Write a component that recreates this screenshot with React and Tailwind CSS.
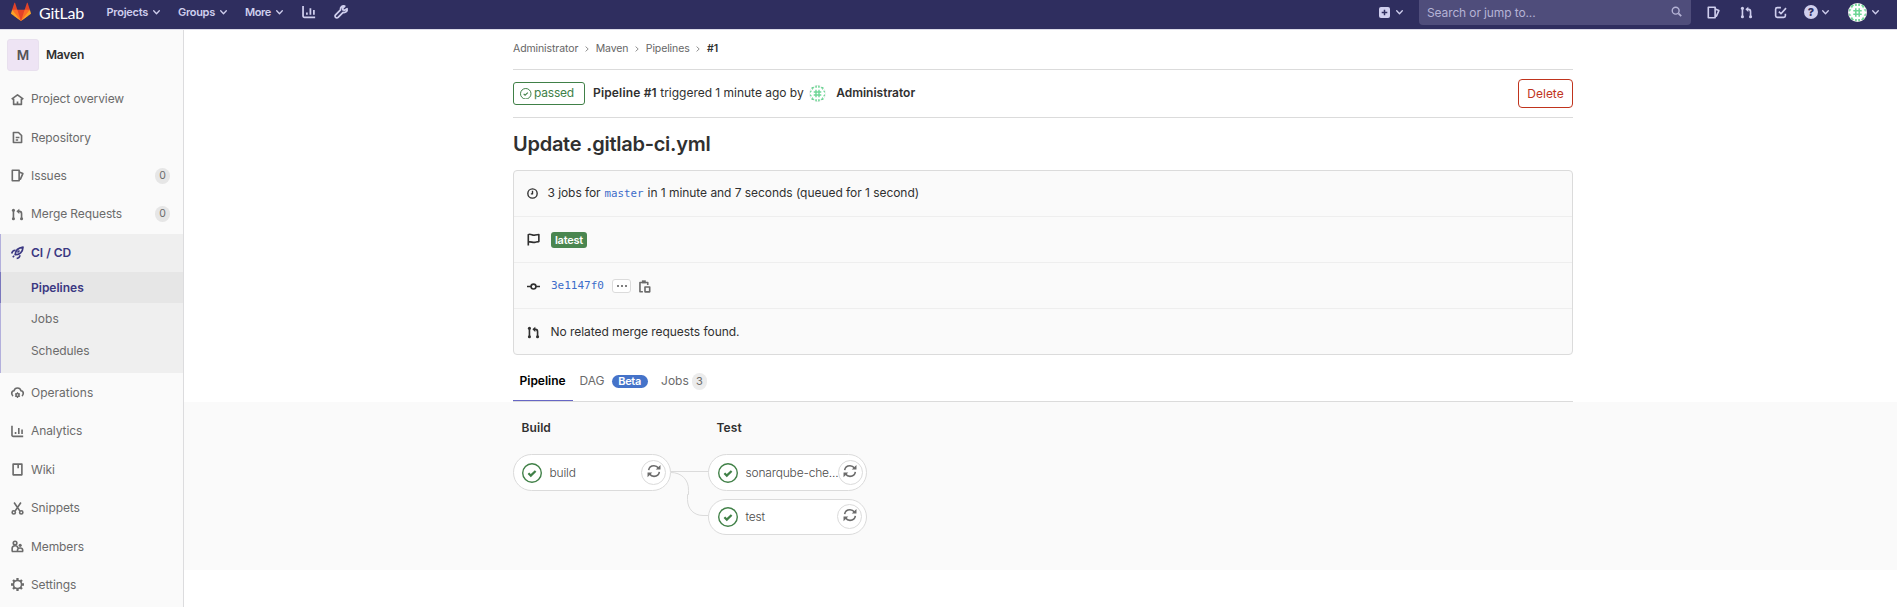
const ICONS = {
  home: <path d="M3.2 7v7h9.6V7M.8 7.6 8 2.4l7.2 5.2M8 14v-3.5" />,
  doc: <path d="M3 1.8h6.2L13 5.6v8.6H3zM5.8 8h4.6M5.8 11h3" />,
  issues: <path d="M1.6 1.6H10v12.8H1.6zM10 3.6l4.6 2-3 6.8H10" />,
  merge: (
    <>
      <path d="M3 3v10M13 13V7.2C13 5 12 4.2 10.6 4.2H9" />
      <path d="M10.2.8v6.6L6.6 4.1z" fill="currentColor" stroke="none" />
      <circle cx="3" cy="2.8" r="1.9" fill="currentColor" stroke="none" />
      <circle cx="3" cy="13.2" r="1.9" fill="currentColor" stroke="none" />
      <circle cx="13" cy="13.2" r="1.9" fill="currentColor" stroke="none" />
    </>
  ),
  rocket: (
    <>
      <path d="M5 10.8C5.4 6.4 8.6 2.2 14.8 1.4 14.6 7.2 10.4 11 5 10.8zM8 8l2.4-2.4" />
      <path d="M5.6 5.2C3 5 1.4 6.8.8 9.2M11 11.4c-.2 2.4-1.8 3.6-4 4M3.8 12.2l-1.6 1.6" />
    </>
  ),
  operations: (
    <>
      <path d="M2.6 12.2C1.4 11.6.9 10.4.9 9c0-1.7 1.2-3 2.8-3.1C4.3 3.6 6 2.4 8 2.4s3.7 1.2 4.3 3.5c1.6.1 2.8 1.4 2.8 3.1 0 1.4-.5 2.6-1.7 3.2" />
      <circle cx="8" cy="11.2" r="1.9" />
      <path d="M8 7.8v1M8 13.6v1.2M5 9.5l1 .5M10 12.4l1 .5M5 12.9l1-.5M10 10l1-.5" strokeWidth="1.5" />
    </>
  ),
  chart: <path d="M1.2 1v11.5A1.5 1.5 0 0 0 2.7 14H15M5.6 8.5V11M9.6 3.8V11M13.6 5.6V11" />,
  wiki: <path d="M2.6 1.4h10.8v13.2H2.6zM8.8 2v4.6" />,
  scissors: (
    <>
      <path d="M3.8.6 11 11.2M12.2.6 5 11.2" />
      <circle cx="3.4" cy="12.8" r="2" />
      <circle cx="12.6" cy="12.8" r="2" />
    </>
  ),
  members: (
    <>
      <circle cx="5" cy="3.8" r="2.2" />
      <path d="M1.4 14v-3.5C1.4 8 3 7 5 7s3.2.8 3.4 2.6M1 14.2h14M8 14v-1.5c0-1.9 1.4-2.7 3.2-2.7s3.2.8 3.2 2.7V14" />
      <circle cx="11.3" cy="6.6" r="1.9" fill="currentColor" stroke="none" />
    </>
  ),
  settings: (
    <>
      <circle cx="8" cy="8" r="5" />
      <path d="M8 0v3M8 13v3M0 8h3M13 8h3M2.5 2.5l2 2M11.5 11.5l2 2M2.5 13.5l2-2M11.5 4.5l2-2" strokeWidth="2.8" />
    </>
  ),
  wrench: (
    <path d="M14.9 4.3 12 6l-1.8-.4-.3-1.7 2.4-2.6C9.4.5 7 2.6 7.4 5.6l-5.6 5.6a2 2 0 0 0 2.9 2.9l5.7-5.6c3 .6 5.2-1.6 4.5-4.2z" />
  ),
  todo: <path d="M8.5 2H4a2 2 0 0 0-2 2v8a2 2 0 0 0 2 2h8a2 2 0 0 0 2-2V9.5M6 7l2.6 2.6 6.2-7" />,
  search: (
    <>
      <circle cx="6.8" cy="6.8" r="5" />
      <path d="m10.8 10.8 4 4" strokeWidth="2.6" />
    </>
  ),
  flag: <path d="M1.6 15.5V2c3-1.6 5 1.4 8 .6 1.600-.4 3-.8 5-.8v8.800c-2 0-3.200.6-5 .9-3 .5-5-1.500-8-.3" />,
  commit: (
    <>
      <circle cx="8" cy="8" r="3" />
      <path d="M0 8h5M11 8h5" />
    </>
  ),
  clock: (
    <>
      <circle cx="8" cy="8" r="6.8" />
      <path d="M8 4v4.6H5.6" />
    </>
  ),
  clipboard: (
    <>
      <path d="M6 14.4H2.4V3H12v3" />
      <path d="M4.8.4h4.8V4H4.8z" fill="currentColor" stroke="none" />
      <path d="M8.6 8.6h5.8v6H8.6z" />
    </>
  ),
  retry: (
    <>
      <path d="M1.9 7C2.3 4 4.8 1.9 8 1.9c2 0 3.9 1 5 2.6M14.1 9c-.4 3-2.9 5.1-6.1 5.1-2 0-3.9-1-5-2.6" />
      <path d="M15.4 1v5.400H10zM.6 15V9.600H6z" fill="currentColor" stroke="none" />
    </>
  ),
};

function Icon({ name, className = "size-[13px]", width = 2 }) {
  return (
    <svg viewBox="0 0 16 16" fill="none" stroke="currentColor" strokeWidth={width} strokeLinejoin="round" className={`shrink-0 overflow-visible ${className}`}>
      {ICONS[name]}
    </svg>
  );
}

function Chevron({ className = "" }) {
  return (
    <svg viewBox="0 0 7 5" fill="none" stroke="currentColor" strokeWidth="1.3" strokeLinecap="round" strokeLinejoin="round" className={`h-[5px] w-[7px] shrink-0 ${className}`}>
      <path d="M.7.8 3.5 3.7 6.3.8" />
    </svg>
  );
}

function Tanuki() {
  return (
    <svg viewBox="0 0 36 36" className="size-5 shrink-0">
      <path fill="#e24329" d="M2 14l9.38 9v-9l-4-12.28c-.205-.632-1.176-.632-1.38 0z" />
      <path fill="#e24329" d="M34 14l-9.38 9v-9l4-12.28c.205-.632 1.176-.632 1.38 0z" />
      <path fill="#e24329" d="M18 34.38 3 14h30z" />
      <path fill="#fc6d26" d="M18 34.38 11.38 14H2l4 11z" />
      <path fill="#fc6d26" d="M18 34.38 24.62 14H34l-4 11z" />
      <path fill="#fca326" d="M2 14 .1 20.16c-.18.565 0 1.2.5 1.56L18 34.38z" />
      <path fill="#fca326" d="m34 14 1.9 6.16c.18.565 0 1.2-.5 1.56L18 34.38z" />
    </svg>
  );
}

function Identicon({ className }) {
  return (
    <svg viewBox="0 0 18 18" className={`shrink-0 rounded-full ${className}`}>
      <rect width="18" height="18" fill="#fff" />
      <path d="M7.4 5v8M10.6 5v8M5 7.4h8M5 10.6h8" stroke="#6fd796" strokeWidth="1.5" fill="none" />
      <g fill="#85deа6" className="fill-[#7bdca0]">
        <path d="M2 2h3.8L3.6 5.2zM16 2h-3.8l2.2 3.2zM2 16h3.8l-2.2-3.2zM16 16h-3.8l2.2-3.2z" />
        <path d="M6.6.6h1.8v2.2H6.6zM9.6.6h1.8v2.2H9.6zM6.6 15.200h1.8v2.200H6.600zM9.600 15.200h1.800v2.200H9.600z" />
        <path d="M.6 6h2.600L1.600 8.600zM17.400 6h-2.600l1.600 2.600zM.6 12h2.600L1.600 9.400zM17.400 12h-2.600l1.600-2.600z" />
      </g>
      <circle cx="9" cy="9" r="8.6" fill="none" stroke="#000" strokeOpacity=".1" strokeWidth=".8" />
    </svg>
  );
}

function StatusCheck({ className, ring, tick }) {
  return (
    <svg viewBox="0 0 20 20" fill="none" stroke="currentColor" className={`shrink-0 text-[#408047] ${className}`}>
      <circle cx="10" cy="10" r={10 - ring / 2} strokeWidth={ring} />
      <path d="m6.4 10.2 2.4 2.4L13.6 8" strokeWidth={tick} />
    </svg>
  );
}

function Header() {
  return (
    <header className="h-[30px] shrink-0 border-b border-[#dcdbe8] bg-[#2f2e5f] text-[#d0cfee]">
      <div className="flex h-6 items-center pl-[11px]">
        <Tanuki />
        <span className="ml-2 mt-0.5 w-[44px] font-['Lato',sans-serif] text-[16px] leading-none tracking-[-0.2px] text-white">GitLab</span>
        <nav className="ml-[23.5px] flex items-center text-[11px] font-semibold leading-none">
          <span className="w-[46.5px] tracking-[-0.25px]">Projects</span>
          <Chevron />
          <span className="ml-[18px] w-[42px] tracking-[-0.3px]">Groups</span>
          <Chevron />
          <span className="ml-[18px] w-[31px] tracking-[-0.4px]">More</span>
          <Chevron />
        </nav>
        <Icon name="chart" className="ml-[19px] size-[14px]" />
        <Icon name="wrench" className="ml-[18px] size-[14px]" />
        <div className="ml-auto flex items-center pr-[18px]">
          <svg viewBox="0 0 11 11" className="size-[11px]">
            <rect width="11" height="11" rx="2" fill="#d0cfee" />
            <path d="M5.5 2.7v5.6M2.7 5.5h5.6" stroke="#2f2e5f" strokeWidth="1.5" />
          </svg>
          <Chevron className="ml-1.5 mr-4" />
          <div className="-mt-px flex h-[27px] w-[272px] items-center justify-between self-start rounded-b bg-[#4f4d7b] pl-2 pr-[9px] text-[12px] tracking-[-0.12px] text-[#b5b3d6]">
            <span className="pt-0.5">Search or jump to...</span>
            <Icon name="search" className="size-[11px]" />
          </div>
          <Icon name="issues" className="ml-4 size-[13px]" />
          <Icon name="merge" className="ml-5 size-[13px]" />
          <Icon name="todo" className="ml-[21px] size-[13px]" />
          <span className="ml-[17px] flex size-[14px] items-center justify-center rounded-full bg-[#d0cfee] text-[11px] font-extrabold leading-none text-[#2f2e5f]">?</span>
          <Chevron className="ml-1" />
          <Identicon className="ml-[19px] size-[19px]" />
          <Chevron className="ml-[5px]" />
        </div>
      </div>
    </header>
  );
}

function NavItem({ icon, label, count, className = "tracking-[-0.09px]" }) {
  return (
    <a className={`flex h-[38.4px] items-center pl-[11px] pr-[13px] ${className}`}>
      <Icon name={icon} />
      <span className="ml-[7px]">{label}</span>
      {count !== undefined && (
        <span className="ml-auto flex h-4 w-[15px] items-center justify-center rounded-full bg-[#e6e6e6] text-[10.5px]">{count}</span>
      )}
    </a>
  );
}

function Sidebar() {
  return (
    <aside className="w-[184px] shrink-0 border-r border-[#dcdcde] bg-[#fafafa] text-[12px] text-[#6b6b6b]">
      <div className="flex h-[50px] items-center pl-[7px] text-[#303030]">
        <span className="flex size-8 items-center justify-center rounded-[3px] border border-[#e8e0ee] bg-[#eee4f4] text-[13.5px] font-semibold text-[#555]">M</span>
        <span className="ml-[7px] text-[12px] font-semibold tracking-[-0.2px]">Maven</span>
      </div>
      <NavItem icon="home" label="Project overview" className="tracking-[-0.1px]" />
      <NavItem icon="doc" label="Repository" />
      <NavItem icon="issues" label="Issues" count={0} />
      <NavItem icon="merge" label="Merge Requests" count={0} />
      <div className="mb-[1.2px] h-[139px] bg-[#efefef] shadow-[inset_1px_0_0_#b3b0dc]">
        <NavItem icon="rocket" label="CI / CD" className="font-semibold text-[#3b3882]" />
        <a className="flex h-[31px] items-center bg-[#e6e6e6] pl-[31px] pt-px font-semibold text-[#3b3882] shadow-[inset_1px_0_0_#7a77bd]">Pipelines</a>
        <a className="flex h-8 items-center pl-[31px]">Jobs</a>
        <a className="flex h-8 items-center pl-[31px] tracking-[-0.09px]">Schedules</a>
      </div>
      <NavItem icon="operations" label="Operations" className="" />
      <NavItem icon="chart" label="Analytics" />
      <NavItem icon="wiki" label="Wiki" />
      <NavItem icon="scissors" label="Snippets" />
      <NavItem icon="members" label="Members" />
      <NavItem icon="settings" label="Settings" />
    </aside>
  );
}

function Crumb({ children }) {
  return (
    <>
      <span>{children}</span>
      <svg viewBox="0 0 4 6" fill="none" stroke="#919191" className="mx-[6.7px] h-1.5 w-1">
        <path d="m.6.6 2.6 2.4L.6 5.4" />
      </svg>
    </>
  );
}

function InfoRow({ children, className = "h-[46px] border-b border-[#eeeeee]" }) {
  return <div className={`flex items-center pl-[13px] ${className}`}>{children}</div>;
}

function Job({ name, className = "h-[37px] pl-2" }) {
  return (
    <div className={`flex items-center rounded-full border border-[#dbdbdb] bg-white pr-1 ${className}`}>
      <StatusCheck className="size-5" ring={1.4} tick={2.2} />
      <span className="ml-[7.5px] mt-px w-[92px] whitespace-nowrap text-[12px] font-light tracking-[-0.18px] text-[#4a4a4a]">{name}</span>
      <span className="ml-auto flex size-[25px] shrink-0 items-center justify-center rounded-full border border-[#dbdbdb] bg-white text-[#6b6b6b]">
        <Icon name="retry" className="-mt-[3px] size-[14px]" width={1.8} />
      </span>
    </div>
  );
}

function Stage({ title, children, className }) {
  return (
    <div className={`flex flex-col ${className}`}>
      <h3 className="flex h-[52px] items-center pl-[8.5px] text-[12px] font-semibold tracking-[0.08px]">{title}</h3>
      {children}
    </div>
  );
}

export default function App() {
  return (
    <div className="flex h-[607px] w-[1897px] flex-col overflow-hidden bg-white font-['Inter','Liberation_Sans',sans-serif] text-[#303030]">
      <Header />
      <div className="flex min-h-0 flex-1">
        <Sidebar />
        <main className="min-w-0 flex-1">
          <div className="ml-[329px] w-[1060px]">
            <div className="flex h-10 items-center border-b border-[#dbdbdb] pb-px text-[10.5px] tracking-[-0.1px] text-[#666]">
              <Crumb>Administrator</Crumb>
              <Crumb>Maven</Crumb>
              <Crumb>Pipelines</Crumb>
              <span className="font-semibold text-[#303030]">#1</span>
            </div>
            <div className="flex h-12 items-center border-b border-[#dbdbdb] text-[12px]">
              <span className="flex h-[23px] w-[72px] items-center rounded-[3px] border border-[#408047] pl-1.5 text-[#408047]">
                <StatusCheck className="size-[11.5px]" ring={1.7} tick={1.9} />
                <span className="-mt-px ml-[2.5px] tracking-[-0.2px]">passed</span>
              </span>
              <span className="-mt-px ml-2 font-semibold tracking-[0.16px]">Pipeline #1</span>
              <span className="-mt-px ml-[3.5px] tracking-[-0.02px]">triggered 1 minute ago by</span>
              <Identicon className="ml-[5.5px] size-[17px]" />
              <span className="-mt-px ml-[10px] font-semibold">Administrator</span>
              <button className="ml-auto h-[29px] w-[55px] rounded-[4px] border border-[#c0341d] text-[#c0341d]">Delete</button>
            </div>
            <h1 className="flex h-[52px] items-center text-[20px] font-semibold tracking-[-0.26px]">Update .gitlab-ci.yml</h1>
            <section className="h-[185px] rounded-[4px] border border-[#dbdbdb] bg-[#fafafa] text-[12px]">
              <InfoRow className="h-[46px] border-b border-[#eeeeee] pb-px">
                <Icon name="clock" className="size-[11px]" />
                <span className="ml-[9.5px] tracking-[-0.07px]">3 jobs for</span>
                <span className="ml-1 mt-0.5 font-['DejaVu_Sans_Mono',monospace] text-[10.8px] text-[#3c6cc9]">master</span>
                <span className="ml-1 tracking-[-0.05px]">in 1 minute and 7 seconds (queued for 1 second)</span>
              </InfoRow>
              <InfoRow>
                <Icon name="flag" />
                <span className="ml-[11px] mt-px flex h-4 w-9 items-center justify-center rounded-[3px] bg-[#4a8650] text-[11px] font-semibold tracking-[-0.22px] text-white">latest</span>
              </InfoRow>
              <InfoRow className="h-[46px] border-b border-[#eeeeee] pt-px">
                <Icon name="commit" />
                <span className="ml-[11px] mt-px font-['DejaVu_Sans_Mono',monospace] text-[11px] text-[#3c6cc9]">3e1147f0</span>
                <span className="ml-[8.5px] flex h-[14px] w-[19px] items-center justify-center gap-[1.5px] rounded-[3px] border border-[#dbdbdb] bg-white">
                  <i className="size-[2.5px] rounded-full bg-[#555]" />
                  <i className="size-[2.5px] rounded-full bg-[#555]" />
                  <i className="size-[2.5px] rounded-full bg-[#555]" />
                </span>
                <Icon name="clipboard" className="ml-[7px] size-[13px] text-[#6b6b6b]" />
              </InfoRow>
              <InfoRow className="h-[45px] pt-px">
                <Icon name="merge" />
                <span className="ml-[10.5px] tracking-[-0.05px]">No related merge requests found.</span>
              </InfoRow>
            </section>
            <div className="flex h-[47px] border-b border-[#dbdbdb] text-[12px] text-[#6b6b6b]">
              <div className="flex w-[60px] items-center border-b border-[#6666c4] pl-[6.5px] pt-1.5 font-semibold text-black">Pipeline</div>
              <div className="flex items-center pt-1.5">
                <span className="ml-[6.5px]">DAG</span>
                <span className="ml-[7px] mt-px flex h-[13px] w-9 items-center justify-center rounded-full bg-[#4573c9] text-[11px] font-semibold tracking-[-0.35px] text-white">Beta</span>
                <span className="ml-[13.5px]">Jobs</span>
                <span className="ml-[3px] mt-px flex h-[17px] w-[15px] items-center justify-center rounded-full bg-[#ececec] text-[11px]">3</span>
              </div>
            </div>
          </div>
          <div className="h-[168px] bg-[#fafafa] pl-[329px]">
            <div className="flex">
              <Stage title="Build" className="w-[158px]">
                <Job name="build" />
              </Stage>
              <svg viewBox="0 0 37 64" fill="none" stroke="#dbdbdb" className="mt-[52px] h-16 w-[37px]">
                <path d="M0 17.5h37M0 18.5c10 0 18 7 17.5 18v4h-1v5c0 9.5 6.5 16 15.5 16h5" />
              </svg>
              <Stage title="Test" className="w-[159px]">
                <Job name="sonarqube-che..." className="h-[37px] pl-[9px]" />
                <Job name="test" className="mt-2 h-9 pb-px pl-[9px]" />
              </Stage>
            </div>
          </div>
        </main>
      </div>
    </div>
  );
}
